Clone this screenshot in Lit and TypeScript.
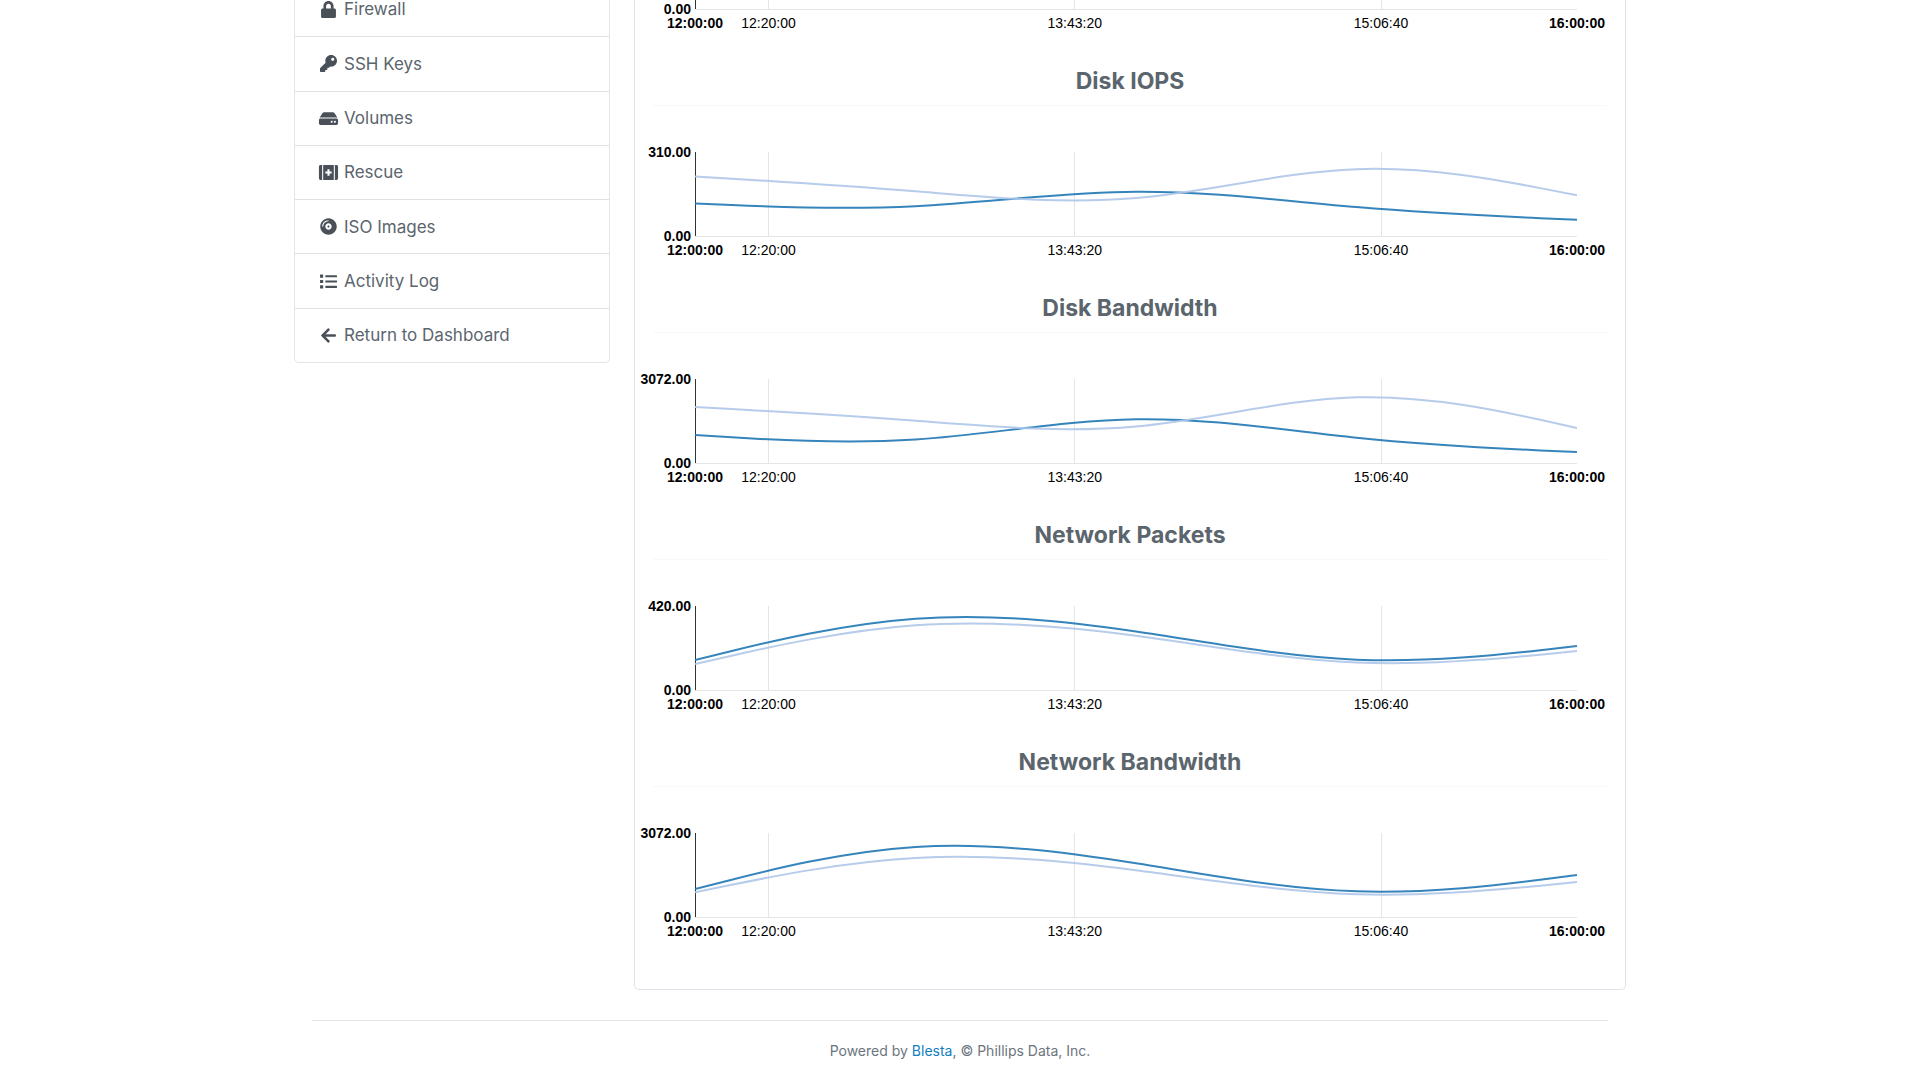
import { LitElement, html, svg, css, nothing } from "lit";
import { customElement, property } from "lit/decorators.js";

interface Series {
  color: string;
  values: number[];
}

interface ChartData {
  title: string;
  max: number;
  series: Series[];
}

const DARK = "#1f77b4";
const LIGHT = "#aec7e8";
const PLOT_HEIGHT = 84;
const MINUTES = 240;

const TICKS = [
  { label: "12:20:00", at: 1200 / 14400 },
  { label: "13:43:20", at: 6200 / 14400 },
  { label: "15:06:40", at: 11200 / 14400 },
];

const CHARTS: ChartData[] = [
  {
    title: "Disk IOPS",
    max: 310,
    series: [
      { color: DARK, values: [120, 85, 200, 95, 60] },
      { color: LIGHT, values: [220, 170, 90, 310, 150] },
    ],
  },
  {
    title: "Disk Bandwidth",
    max: 3072,
    series: [
      { color: DARK, values: [1024, 512, 2080, 768, 400] },
      { color: LIGHT, values: [2048, 1590, 840, 3072, 1280] },
    ],
  },
  {
    title: "Network Packets",
    max: 420,
    series: [
      { color: DARK, values: [150, 420, 310, 95, 220] },
      { color: LIGHT, values: [130, 380, 290, 85, 195] },
    ],
  },
  {
    title: "Network Bandwidth",
    max: 3072,
    series: [
      { color: DARK, values: [1024, 3072, 2048, 512, 1536] },
      { color: LIGHT, values: [900, 2560, 1800, 480, 1280] },
    ],
  },
];

/** Cubic B-spline whose end points are repeated so it starts and ends on the data. */
function basisPath(values: number[], max: number): string {
  const step = MINUTES / (values.length - 1);
  const data = values.map((v, i) => [i * step, PLOT_HEIGHT * (1 - v / max)]);
  const first = data[0];
  const last = data[data.length - 1];
  const p = [first, first, ...data, last, last];
  const n = (v: number) => v.toFixed(2);
  let d = `M${n(first[0])},${n(first[1])}`;
  for (let i = 0; i + 3 < p.length; i++) {
    const [b, c, e] = [p[i + 1], p[i + 2], p[i + 3]];
    const c1 = [0, 1].map((k) => (2 * b[k] + c[k]) / 3);
    const c2 = [0, 1].map((k) => (b[k] + 2 * c[k]) / 3);
    const end = [0, 1].map((k) => (b[k] + 4 * c[k] + e[k]) / 6);
    d += `C${n(c1[0])},${n(c1[1])} ${n(c2[0])},${n(c2[1])} ${n(end[0])},${n(end[1])}`;
  }
  return d;
}

@customElement("usage-chart")
export class UsageChart extends LitElement {
  @property({ type: Number }) max = 0;
  @property({ attribute: false }) series: Series[] = [];

  static styles = css`
    :host {
      display: block;
    }
    .chart {
      display: block;
      width: 100%;
      height: 108px;
      overflow: visible;
      font: 14px "Liberation Sans", Arial, sans-serif;
      fill: #000;
    }
    .bold {
      font-weight: 700;
    }
    .grid {
      stroke: #e5e5e5;
      shape-rendering: crispEdges;
    }
    .axis {
      stroke: #333;
      shape-rendering: crispEdges;
    }
    .line {
      fill: none;
      stroke-width: 2;
      stroke-opacity: 0.9;
      vector-effect: non-scaling-stroke;
    }
    .start {
      text-anchor: end;
    }
    .mid {
      text-anchor: middle;
    }
  `;

  render() {
    return html`<svg class="chart" role="img">
      ${TICKS.map(
        (t) => svg`<line class="grid" x1="${t.at * 100}%" x2="${t.at * 100}%" y1="0" y2="84"></line>
          <text class="mid" x="${t.at * 100}%" y="103">${t.label}</text>`
      )}
      <line class="grid" x1="0" x2="100%" y1="84" y2="84"></line>
      <line class="axis" x1="0" x2="0" y1="0" y2="84"></line>
      <svg width="100%" height="84" viewBox="0 0 240 84" preserveAspectRatio="none">
        ${this.series.map(
          (s) => svg`<path class="line" stroke=${s.color} d=${basisPath(s.values, this.max)}></path>`
        )}
      </svg>
      ${this.max ? svg`<text class="start bold" x="-4" y="5">${this.max.toFixed(2)}</text>` : nothing}
      <text class="start bold" x="-4" y="89">0.00</text>
      <text class="mid bold" x="0" y="103">12:00:00</text>
      <text class="mid bold" x="100%" y="103">16:00:00</text>
    </svg>`;
  }
}

const NAV = [
  {
    label: "Firewall",
    width: 448,
    path: "M400 224h-24v-72C376 68.2 307.8 0 224 0S72 68.2 72 152v72H48c-26.5 0-48 21.5-48 48v192c0 26.5 21.5 48 48 48h352c26.5 0 48-21.5 48-48V272c0-26.5-21.5-48-48-48zm-104 0H152v-72c0-39.7 32.3-72 72-72s72 32.3 72 72v72z",
  },
  {
    label: "SSH Keys",
    width: 512,
    path: "M512 176.001C512 273.203 433.202 352 336 352c-11.22 0-22.19-1.062-32.827-3.069l-24.012 27.014A23.999 23.999 0 0 1 261.223 384H224v40c0 13.255-10.745 24-24 24h-40v40c0 13.255-10.745 24-24 24H24c-13.255 0-24-10.745-24-24v-78.059c0-6.365 2.529-12.47 7.029-16.971l161.802-161.802C163.108 213.814 160 195.271 160 176 160 78.798 238.797.001 335.999 0 433.488-.001 512 78.511 512 176.001zM336 128c0 26.51 21.49 48 48 48s48-21.49 48-48-21.49-48-48-48-48 21.49-48 48z",
  },
  {
    label: "Volumes",
    width: 576,
    path: "M576 304v96c0 26.51-21.49 48-48 48H48c-26.51 0-48-21.49-48-48v-96c0-26.51 21.49-48 48-48h480c26.51 0 48 21.49 48 48zm-48-80a79.557 79.557 0 0 1 30.777 6.165L462.25 85.374A48.003 48.003 0 0 0 422.311 64H153.689a48 48 0 0 0-39.938 21.374L17.223 230.165A79.557 79.557 0 0 1 48 224h480zm-48 96c-17.673 0-32 14.327-32 32s14.327 32 32 32 32-14.327 32-32-14.327-32-32-32zm-96 0c-17.673 0-32 14.327-32 32s14.327 32 32 32 32-14.327 32-32-14.327-32-32-32z",
  },
  {
    label: "Rescue",
    width: 576,
    path: "M0 80v352c0 26.5 21.5 48 48 48h48V32H48C21.5 32 0 53.5 0 80zm128 400h320V32H128v448zm64-248c0-4.4 3.6-8 8-8h56v-56c0-4.4 3.6-8 8-8h48c4.4 0 8 3.6 8 8v56h56c4.4 0 8 3.6 8 8v48c0 4.4-3.6 8-8 8h-56v56c0 4.4-3.6 8-8 8h-48c-4.4 0-8-3.6-8-8v-56h-56c-4.4 0-8-3.6-8-8v-48zM528 32h-48v448h48c26.5 0 48-21.5 48-48V80c0-26.5-21.5-48-48-48z",
  },
  {
    label: "ISO Images",
    width: 496,
    path: "M248 8C111 8 0 119 0 256s111 248 248 248 248-111 248-248S385 8 248 8zM88 256H56c0-105.9 86.1-192 192-192v32c-88.2 0-160 71.8-160 160zm160 96c-53 0-96-43-96-96s43-96 96-96 96 43 96 96-43 96-96 96zm0-128c-17.7 0-32 14.3-32 32s14.3 32 32 32 32-14.3 32-32-14.3-32-32-32z",
  },
  {
    label: "Activity Log",
    width: 512,
    path: "M80 368H16a16 16 0 0 0-16 16v64a16 16 0 0 0 16 16h64a16 16 0 0 0 16-16v-64a16 16 0 0 0-16-16zm0-320H16A16 16 0 0 0 0 64v64a16 16 0 0 0 16 16h64a16 16 0 0 0 16-16V64a16 16 0 0 0-16-16zm0 160H16a16 16 0 0 0-16 16v64a16 16 0 0 0 16 16h64a16 16 0 0 0 16-16v-64a16 16 0 0 0-16-16zm416 176H176a16 16 0 0 0-16 16v32a16 16 0 0 0 16 16h320a16 16 0 0 0 16-16v-32a16 16 0 0 0-16-16zm0-320H176a16 16 0 0 0-16 16v32a16 16 0 0 0 16 16h320a16 16 0 0 0 16-16V80a16 16 0 0 0-16-16zm0 160H176a16 16 0 0 0-16 16v32a16 16 0 0 0 16 16h320a16 16 0 0 0 16-16v-32a16 16 0 0 0-16-16z",
  },
  {
    label: "Return to Dashboard",
    width: 448,
    path: "M257.5 445.1l-22.2 22.2c-9.4 9.4-24.6 9.4-33.9 0L7 273c-9.4-9.4-9.4-24.6 0-33.9L201.4 44.7c9.4-9.4 24.6-9.4 33.9 0l22.2 22.2c9.5 9.5 9.3 25-.4 34.3L136.6 216H424c13.3 0 24 10.7 24 24v32c0 13.3-10.7 24-24 24H136.6l120.5 114.8c9.8 9.3 10 24.8.4 34.3z",
  },
];

@customElement("app-root")
export class AppRoot extends LitElement {
  static styles = css`
    :host {
      display: block;
      min-height: 100vh;
      overflow: hidden;
      background: #fff;
      color: #5b656d;
      font: 17px/24px Inter, "Liberation Sans", sans-serif;
    }
    * {
      box-sizing: border-box;
    }
    .container {
      max-width: 1332px;
      margin: 0 auto;
    }
    .columns {
      display: grid;
      grid-template-columns: 316px minmax(0, 1fr);
      gap: 24px;
      align-items: start;
    }
    /* Both columns continue above the visible part of the page. */
    .nav {
      display: grid;
      grid-auto-rows: 1fr;
      min-height: 381px;
      list-style: none;
      margin: -18px 0 0;
      padding: 0;
      border: 1px solid #e3e4e5;
      border-top: 0;
      border-radius: 0 0 5px 5px;
    }
    .item {
      display: grid;
    }
    .item + .item {
      border-top: 1px solid #e0e1e2;
    }
    .link {
      display: flex;
      align-items: center;
      gap: 5px;
      padding: 0 23px;
      color: inherit;
      text-decoration: none;
    }
    .icon {
      flex: none;
      width: 21px;
      height: 17px;
      fill: #495057;
    }
    .card {
      margin-top: -75px;
      padding: 0 18px 48px;
      border: 1px solid #dfe2e9;
      border-top: 0;
      border-radius: 0 0 5px 5px;
    }
    .title {
      margin: 32px 0 46px;
      padding-bottom: 8px;
      border-bottom: 1px solid #f7f8f8;
      font-size: 23px;
      line-height: 32px;
      font-weight: 700;
      text-align: center;
    }
    .plot {
      margin: 0 30px 0 42px;
    }
    .footer {
      margin: 30px 18px 0;
      padding: 18px 0;
      border-top: 1px solid #e3e4e5;
      font-size: 14px;
      text-align: center;
      color: #6c757d;
    }
    .footer a {
      color: #1080c0;
      text-decoration: none;
    }
  `;

  render() {
    return html`<div class="container">
      <div class="columns">
        <nav>
          <ul class="nav">
            ${NAV.map(
              (n) => html`<li class="item">
                <a class="link" href="#">
                  <svg class="icon" viewBox="0 0 ${n.width} 512" aria-hidden="true">
                    <path d=${n.path}></path>
                  </svg>
                  ${n.label}
                </a>
              </li>`
            )}
          </ul>
        </nav>
        <main class="card">
          <usage-chart class="plot"></usage-chart>
          ${CHARTS.map(
            (c) => html`<section>
              <h3 class="title">${c.title}</h3>
              <usage-chart class="plot" .max=${c.max} .series=${c.series}></usage-chart>
            </section>`
          )}
        </main>
      </div>
      <footer class="footer">Powered by <a href="#">Blesta</a>, © Phillips Data, Inc.</footer>
    </div>`;
  }
}
